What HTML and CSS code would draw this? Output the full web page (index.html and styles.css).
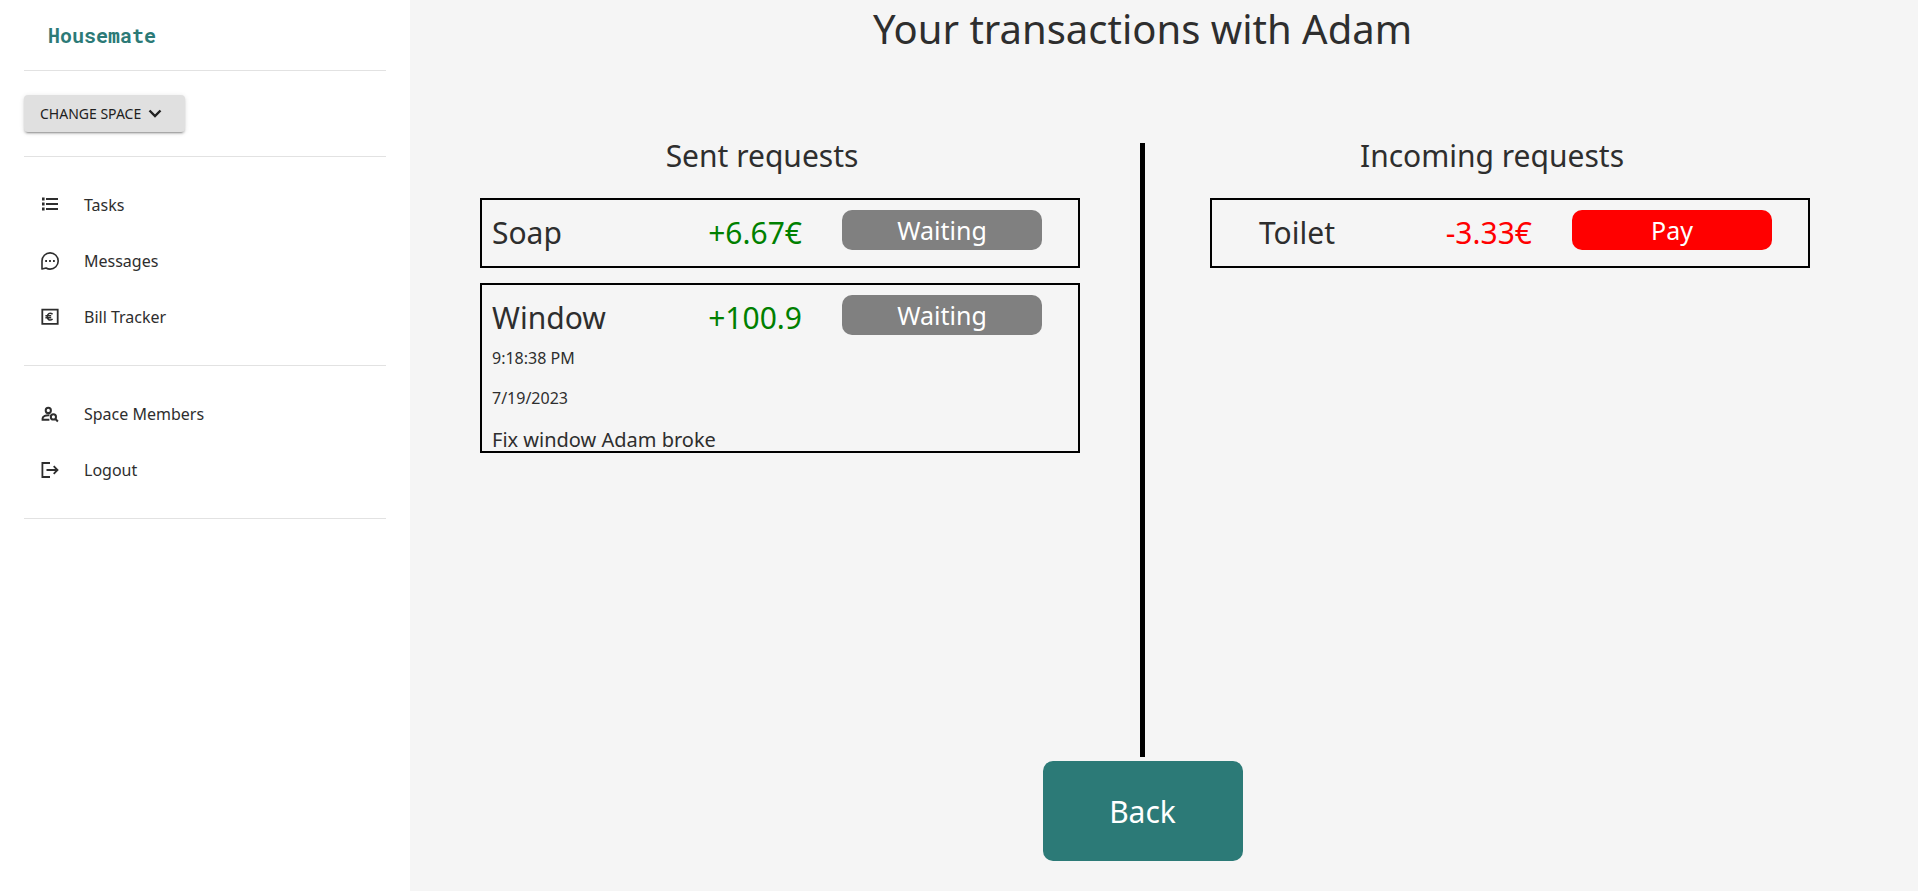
FILE: index.html
```html
<!DOCTYPE html>
<html lang="en">
<head>
<meta charset="utf-8">
<meta name="viewport" content="width=device-width, initial-scale=1">
<title>Housemate</title>
<link rel="stylesheet" href="styles.css">
</head>
<body>
<div class="app">
  <aside class="sidebar">
    <div class="brand"><a href="#">Housemate</a></div>
    <div class="space-switch">
      <button class="space-button" type="button">CHANGE SPACE
        <svg width="16" height="16" viewBox="0 0 16 16" fill="none" stroke="currentColor" stroke-width="2.4"><path d="M2.500 4.500l5.500 5.500 5.500-5.500"/></svg>
      </button>
    </div>
    <nav class="nav">
      <a class="nav-link" href="#">
        <svg class="icon" viewBox="0 0 20 20" fill="none" stroke="currentColor" stroke-width="1.8"><path d="M6 4h12M6 9h12M6 14h12"/><path stroke-width="2.8" d="M2 4h2.600M2 9h2.600M2 14h2.600"/></svg>
        Tasks</a>
      <a class="nav-link" href="#">
        <svg class="icon" viewBox="0 0 20 20" fill="none" stroke="currentColor" stroke-width="1.6"><path d="M2 18V10a8.1 8.1 0 1 1 8.1 8.1c-1.5 0-2.900-.4-4-1.100L2 18z" stroke-linejoin="round"/><path stroke-width="1.800" d="M5.200 10h1.800M9.100 10h1.800M13 10h1.800"/></svg>
        Messages</a>
      <a class="nav-link" href="#">
        <svg class="icon" viewBox="0 0 20 20" fill="none" stroke="currentColor" stroke-width="1.800"><path d="M2.300 2.600h15.400v14.200H2.300z"/><path d="M12.600 7.200c-3-2-5.300-.3-5.300 2.500s2.300 4.500 5.300 2.500M5.400 8.800h5.800M5.400 10.700h5.800" stroke-width="1.500"/></svg>
        Bill Tracker</a>
    </nav>
    <nav class="nav">
      <a class="nav-link" href="#">
        <svg class="icon" viewBox="0 0 20 20" fill="none" stroke="currentColor" stroke-width="2"><circle cx="8.300" cy="6.400" r="2.600"/><path d="M9.500 11.200c-3.500-.4-6.900 1.200-6.900 3v1.600h6.800"/><circle cx="13.400" cy="12.900" r="2.600"/><path d="M15.200 14.800l2.700 2.700"/></svg>
        Space Members</a>
      <a class="nav-link" href="#">
        <svg class="icon" viewBox="0 0 20 20" fill="none" stroke="currentColor" stroke-width="1.800"><path d="M10 3H2.400v14H10M6.500 10h11M13.700 6.200l3.800 3.800-3.800 3.800"/></svg>
        Logout</a>
    </nav>
  </aside>

  <main class="main">
    <h1 class="title">Your transactions with Adam</h1>
    <div class="columns">
      <section class="column sent">
        <h2 class="heading">Sent requests</h2>
        <article class="card">
          <div class="card-head">
            <h3 class="name">Soap</h3>
            <span class="amount plus">+6.67€</span>
            <button class="action waiting" type="button">Waiting</button>
          </div>
        </article>
        <article class="card open">
          <div class="card-head">
            <h3 class="name">Window</h3>
            <span class="amount plus">+100.9</span>
            <button class="action waiting" type="button">Waiting</button>
          </div>
          <p class="stamp">9:18:38 PM</p>
          <p class="stamp">7/19/2023</p>
          <p class="note">Fix window Adam broke</p>
        </article>
      </section>
      <div class="divider"></div>
      <section class="column incoming">
        <h2 class="heading">Incoming requests</h2>
        <article class="card">
          <div class="card-head">
            <h3 class="name">Toilet</h3>
            <span class="amount minus">-3.33€</span>
            <button class="action pay" type="button">Pay</button>
          </div>
        </article>
      </section>
    </div>
    <button class="back" type="button">Back</button>
  </main>
</div>
</body>
</html>
```
FILE: styles.css
```css
* {
  box-sizing: border-box;
}

body {
  margin: 0;
  background: #f5f5f5;
  color: #2e2e2e;
  font-family: "Noto Sans", "Open Sans", sans-serif;
}

h1, h2, h3, p {
  margin: 0;
  font-weight: 400;
}

button {
  border: 0;
  font-family: inherit;
  cursor: pointer;
}

.app {
  display: grid;
  grid-template-columns: 410px 1fr;
  min-height: 100vh;
}

/* Sidebar */

.sidebar {
  padding: 0 24px;
  background: #fff;
}

.brand,
.space-switch,
.nav {
  border-bottom: 1px solid #e2e2e2;
}

.brand {
  padding: 23px 24px;
}

.brand a {
  color: #2c7a77;
  font: 700 20px/24px "Roboto Mono", "DejaVu Sans Mono", monospace;
  text-decoration: none;
  display: block;
}

.space-switch {
  padding: 24px 0;
}

.space-button {
  display: flex;
  align-items: center;
  gap: 6px;
  min-width: 161px;
  height: 37px;
  padding: 0 16px;
  border-radius: 4px;
  background: #e0e0e0;
  color: #212121;
  font-size: 14px;
  box-shadow: 0 3px 1px -2px rgba(0, 0, 0, .2), 0 2px 2px rgba(0, 0, 0, .14), 0 1px 5px rgba(0, 0, 0, .12);
}

.nav {
  padding: 20px 0;
}

.nav-link {
  display: flex;
  align-items: center;
  gap: 24px;
  height: 56px;
  padding: 0 16px;
  color: #2e2e2e;
  font-size: 16px;
  text-decoration: none;
}

.icon {
  width: 20px;
  height: 20px;
}

/* Transactions */

.main {
  display: flex;
  flex-direction: column;
  padding: 0 43px 30px 0;
}

.title {
  margin-bottom: 85px;
  font-size: 40px;
  line-height: 58px;
  text-align: center;
}

.columns {
  flex: 1;
  display: grid;
  grid-template-columns: 1fr 5px 1fr;
  margin-bottom: 4px;
}

.divider {
  background: #000;
}

.column {
  display: flex;
  flex-direction: column;
  gap: 15px;
}

.sent {
  padding: 0 60px 0 70px;
}

.incoming {
  padding: 0 65px;
}

.heading {
  margin-bottom: 14px;
  padding-right: 36px;
  font-size: 30px;
  line-height: 26px;
  text-align: center;
}

.card {
  padding: 10px;
  border: 2px solid #000;
}

.card.open {
  padding-bottom: 0;
}

.card-head {
  display: grid;
  grid-template-columns: 150px 1fr 200px;
  column-gap: 40px;
  align-items: start;
  padding-right: 26px;
}

.name,
.amount {
  font-size: 30px;
  line-height: 46px;
}

.incoming .name {
  text-align: center;
}

.amount {
  text-align: right;
}

.plus {
  color: #008000;
}

.minus {
  color: #f00;
}

.action {
  height: 40px;
  border-radius: 10px;
  color: #fff;
  font-size: 25px;
}

.waiting {
  background: #808080;
}

.pay {
  background: #f00;
}

.stamp {
  margin: 7px 0 20px;
  font-size: 16px;
  line-height: 20px;
}

.stamp + .stamp {
  margin: 0 0 24px;
}

.note {
  padding-bottom: 3px;
  font-size: 20px;
  line-height: 16px;
}

.back {
  align-self: center;
  width: 200px;
  height: 100px;
  border-radius: 10px;
  background: #2c7a77;
  color: #fff;
  font-size: 30px;
}
```
